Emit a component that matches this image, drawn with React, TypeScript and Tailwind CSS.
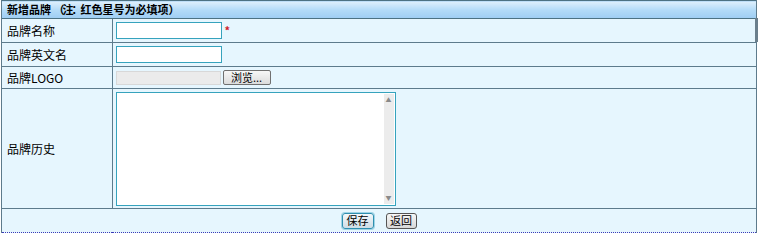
import React from 'react'

// ─── 新增品牌表单 ─────────────────────────────────────────────────────────────

const font = { fontFamily: '"Noto Sans CJK SC", "Liberation Sans", sans-serif' }

function Label({ children }: { children: React.ReactNode }) {
  return (
    <td className="border-r border-b border-[#5d7b8c] pl-[5px] text-[12px] text-black align-middle">
      {children}
    </td>
  )
}

export default function App() {
  return (
    <div className="w-[760px] h-[240px] bg-white" style={font}>
      <div className="ml-px w-[756px] border-l border-r border-[#5d7b8c] relative">
        <table className="w-full border-collapse table-fixed bg-[#e6f6fe]">
          <colgroup>
            <col className="w-[110px]" />
            <col />
          </colgroup>
          <tbody>
            <tr className="h-[18px]">
              <td
                colSpan={2}
                className="border-t border-b border-[#4d7283] bg-gradient-to-b from-[#dff0fc] via-[#b3dbf8] to-[#9ecdf3] pl-[5px] text-[11px] font-bold text-black leading-none"
              >
                新增品牌 <span className="tracking-[-2px]">（注：</span>红色星号为必填项<span className="tracking-[-2px]">）</span>
              </td>
            </tr>
            <tr className="h-[24px]">
              <Label>品牌名称</Label>
              <td className="border-b border-[#5d7b8c] pl-[3px]">
                <div className="flex items-center gap-[3px]">
                  <input className="w-[106px] h-[17px] bg-white border border-[#36a3bd] outline-none" />
                  <span className="text-[#d0202a] text-[11px] font-bold leading-none">*</span>
                </div>
              </td>
            </tr>
            <tr className="h-[24px]">
              <Label>品牌英文名</Label>
              <td className="border-b border-[#5d7b8c] pl-[3px]">
                <input className="block w-[106px] h-[17px] bg-white border border-[#36a3bd] outline-none" />
              </td>
            </tr>
            <tr className="h-[22px]">
              <Label>品牌LOGO</Label>
              <td className="border-b border-[#5d7b8c] pl-[3px]">
                <div className="flex items-center gap-[2px]">
                  <div className="w-[105px] h-[14px] bg-[#ebebeb] border border-[#d8d8d8]" />
                  <button className="h-[15px] w-[48px] rounded-[2px] border border-[#707070] bg-gradient-to-b from-[#f7f7f7] to-[#dcdcdc] text-[11px] leading-none text-black">
                    浏览...
                  </button>
                </div>
              </td>
            </tr>
            <tr className="h-[120px]">
              <Label>品牌历史</Label>
              <td className="border-b border-[#5d7b8c] pl-[3px]">
                <div className="flex w-[280px] h-[114px] border border-[#36a3bd] bg-white">
                  <div className="flex-1" />
                  <div className="w-[10px] my-px mr-px bg-[#ececec] flex flex-col justify-between items-center text-[6px] text-[#8a8a8a] leading-none py-[3px]">
                    <span>▲</span>
                    <span>▼</span>
                  </div>
                </div>
              </td>
            </tr>
            <tr className="h-[24px]">
              <td colSpan={2} className="border-b border-dotted border-[#3b3bb8]">
                <div className="flex justify-center gap-[12px]">
                  <button className="h-[16px] w-[32px] rounded-[3px] border border-[#2f8fb0] bg-gradient-to-b from-[#f3f8fb] to-[#cfdde6] text-[11px] leading-none text-black shadow-[0_0_0_1px_#9fd4e6]">
                    保存
                  </button>
                  <button className="h-[16px] w-[31px] rounded-[3px] border border-[#555] bg-gradient-to-b from-[#f7f7f7] to-[#d8d8d8] text-[11px] leading-none text-black">
                    返回
                  </button>
                </div>
              </td>
            </tr>
          </tbody>
        </table>
        <div className="absolute right-[-2px] top-[18px] w-[3px] h-[24px] bg-[#6b7f8c]" />
      </div>
    </div>
  )
}
